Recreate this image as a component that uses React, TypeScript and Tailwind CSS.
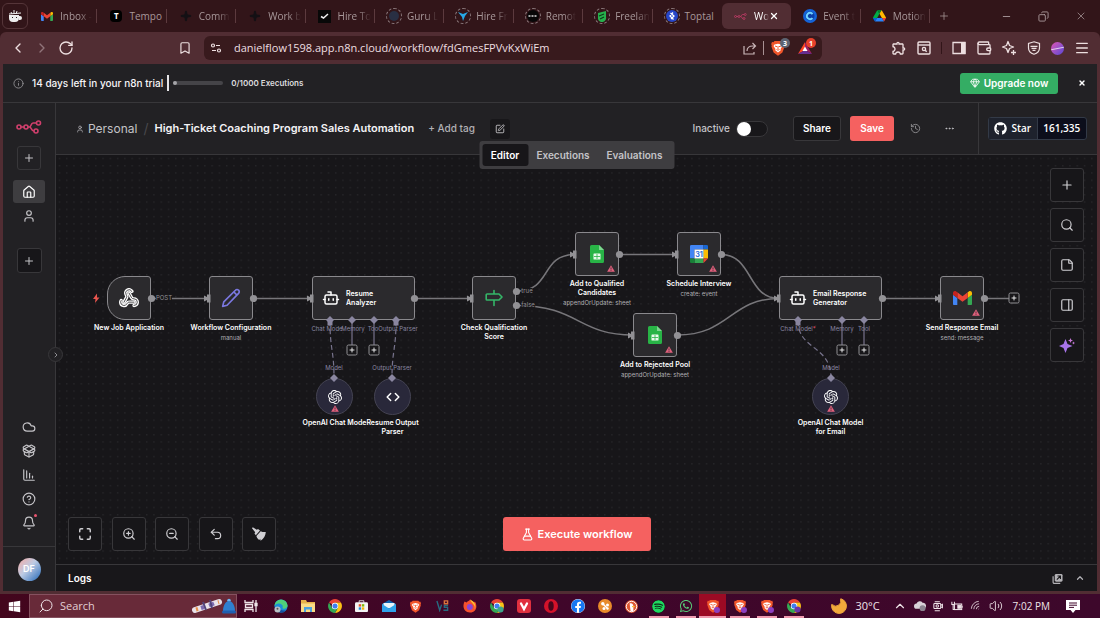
import React from 'react';
import {
  Bell, Bookmark, Bot, ChartColumnDecreasing, ChevronLeft, ChevronRight, ChevronUp, CircleHelp, Cloud, Code,
  Copy, Ellipsis, FlaskConical, Gem, History, House, Info, Maximize, Menu, Minus, Moon, PackageOpen, PanelRight,
  Plus, RotateCw, Search, Sparkle, SquarePen, StickyNote, Undo2, User, Volume2, Wallet, Webhook, Wifi, X, ZoomIn, ZoomOut,
} from 'lucide-react';
import { FaFacebook, FaGithub, FaSpotify, FaWhatsapp, FaWindows } from 'react-icons/fa';
import { MdOutlineExtension } from 'react-icons/md';
import { SiOpenai } from 'react-icons/si';

/* ---------- logos ---------- */

function GmailLogo({ className }: { className?: string }) {
  return (
    <svg viewBox="52 42 88 66" className={className} aria-hidden="true">
      <path fill="#4285f4" d="M58 108h14V74L52 59v43c0 3.32 2.69 6 6 6" />
      <path fill="#34a853" d="M120 108h14c3.32 0 6-2.69 6-6V59l-20 15" />
      <path fill="#fbbc04" d="M120 48v26l20-15v-8c0-7.42-8.47-11.65-14.4-7.2" />
      <path fill="#ea4335" d="M72 74V48l24 18 24-18v26L96 92" />
      <path fill="#c5221f" d="M52 51v8l20 15V48l-5.6-4.2c-5.94-4.45-14.4-.22-14.4 7.2" />
    </svg>
  );
}

function DriveLogo({ className }: { className?: string }) {
  return (
    <svg viewBox="0 0 87.3 78" className={className} aria-hidden="true">
      <path fill="#0066da" d="m6.6 66.85 3.85 6.65c.8 1.4 1.95 2.5 3.3 3.3l13.75-23.8h-27.5c0 1.55.4 3.1 1.2 4.5z" />
      <path fill="#00ac47" d="m43.65 25-13.75-23.8c-1.35.8-2.5 1.9-3.3 3.3l-25.4 44a9.06 9.06 0 0 0-1.2 4.5h27.5z" />
      <path fill="#ea4335" d="m73.55 76.8c1.35-.8 2.5-1.9 3.3-3.3l1.6-2.75 7.65-13.25c.8-1.4 1.2-2.95 1.2-4.5h-27.5l5.85 11.5z" />
      <path fill="#00832d" d="m43.65 25 13.75-23.8c-1.35-.8-2.9-1.2-4.5-1.2h-18.5c-1.6 0-3.15.45-4.5 1.2z" />
      <path fill="#2684fc" d="m59.8 53h-32.3l-13.75 23.8c1.35.8 2.9 1.2 4.5 1.2h50.8c1.6 0 3.15-.45 4.5-1.2z" />
      <path fill="#ffba00" d="m73.4 26.5-12.7-22c-.8-1.4-1.95-2.5-3.3-3.3l-13.75 23.8 16.15 28h27.45c0-1.55-.4-3.1-1.2-4.5z" />
    </svg>
  );
}

function SheetsLogo({ className }: { className?: string }) {
  return (
    <svg viewBox="0 0 14 18" className={className} aria-hidden="true">
      <path fill="#28b446" d="M1.5 0H9l5 5v11.5a1.5 1.5 0 0 1-1.5 1.5h-11A1.5 1.5 0 0 1 0 16.5v-15A1.5 1.5 0 0 1 1.5 0z" />
      <path fill="#7ed68f" d="M9 0l5 5H9z" />
      <rect x="3.5" y="8.5" width="7" height="6" rx=".6" fill="#e9f9ec" />
      <path stroke="#28b446" strokeWidth=".8" d="M7 9v5M4 11.5h6" />
    </svg>
  );
}

function CalendarLogo({ className }: { className?: string }) {
  return (
    <svg viewBox="0 0 20 20" className={className} aria-hidden="true">
      <path fill="#4285f4" d="M1.5 0H15v5H5v10H0V1.5A1.5 1.5 0 0 1 1.5 0z" />
      <path fill="#1967d2" d="M15 0h3.5A1.5 1.5 0 0 1 20 1.5V5h-5z" />
      <path fill="#fbbc04" d="M15 5h5v10h-5z" />
      <path fill="#34a853" d="M5 15h10v5H5z" />
      <path fill="#188038" d="M0 15h5v5H1.5A1.5 1.5 0 0 1 0 18.5z" />
      <path fill="#ea4335" d="M15 15h5l-5 5z" />
      <path fill="#fff" d="M5 5h10v10H5z" />
      <text x="10" y="13" fontSize="8" fontWeight="700" textAnchor="middle" fill="#2a6fdc" fontFamily="Inter, sans-serif">31</text>
    </svg>
  );
}

function N8nLogo({ className }: { className?: string }) {
  return (
    <svg viewBox="0 0 26 14" className={className} fill="none" stroke="currentColor" strokeWidth="1.6" aria-hidden="true">
      <circle cx="3" cy="7" r="2" />
      <circle cx="10" cy="7" r="2" />
      <circle cx="22.5" cy="3" r="2" />
      <circle cx="20" cy="11" r="2" />
      <path d="M5 7h3M12 7h1.5c2 0 1.2-4 3.5-4h3.5M13.5 7c2 0 1.5 4 4.5 4" />
    </svg>
  );
}

function ChromeLogo({ className, badge }: { className?: string; badge?: string }) {
  return (
    <svg viewBox="0 0 16 16" className={className} aria-hidden="true">
      <path fill="#e94435" d="M8 8L1.2 4A7.9 7.9 0 0 1 14.8 4H8z" />
      <path fill="#fbc116" d="M8 8l3.400 2L8 15.9A7.9 7.9 0 0 0 14.8 4H8z" />
      <path fill="#34a853" d="M8 8l3.400 2L8 15.9A7.9 7.9 0 0 1 1.2 4L4.500 10z" />
      <circle cx="8" cy="8" r="3.7" fill="#fff" />
      <circle cx="8" cy="8" r="2.9" fill="#3f7ff0" />
      {badge && <circle cx="12" cy="12" r="3.5" fill={badge} />}
    </svg>
  );
}

function BraveLogo({ className, badge }: { className?: string; badge?: boolean }) {
  return (
    <svg viewBox="0 0 16 16" className={className} aria-hidden="true">
      <path fill="#f1562b" d="M4.500 1h7l1 1.200 1.500-.1.800 2-.5 1.500.3 1-2.200 6L8 15.800l-4.400-3.200-2.200-6 .3-1-.5-1.500.8-2 1.500.1z" />
      <path fill="#fff" d="M4.500 4.500l3.500-.8 3.500.8 1 1.500-2 3 .3 1.300L8 12.500l-2.800-2.200.3-1.300-2-3z" />
      <path stroke="#f1562b" strokeWidth="1" fill="none" d="M5 6l2 .7M11 6l-2 .7M8 6v3M6.500 9.500L8 10.200l1.500-.7" />
      {badge && <circle cx="12.500" cy="12.500" r="3.500" fill="#8c3fc0" />}
    </svg>
  );
}

function EdgeLogo({ className }: { className?: string }) {
  return (
    <svg viewBox="0 0 16 16" className={className} aria-hidden="true">
      <circle cx="8" cy="8" r="7.500" fill="#1b8fd8" />
      <path fill="#4fd07a" d="M8 .5a7.500 7.500 0 0 1 7.500 7c0 2.500-2 3.500-4 3.500-2.500 0-1.500-1.500-1.500-2.500C10 6.500 8 5 5.500 5 3 5 1.300 6.500.6 8 .7 4 4 .5 8 .5z" />
      <path fill="#144f9e" d="M6 8.500c0 3.500 3 5.500 7.500 4.500A7.500 7.500 0 0 1 6 15.200z" />
      <circle cx="4" cy="12" r="3.500" fill="#b9c1c6" />
      <circle cx="4" cy="11.200" r="1.100" fill="#555" />
    </svg>
  );
}

function WarningMark({ className }: { className?: string }) {
  return (
    <svg viewBox="0 0 8 7" className={className} aria-hidden="true">
      <path fill="#e0607c" d="M4 .2L7.900 6.800H.1z" />
      <path stroke="#2b2a2d" strokeWidth=".8" d="M4 2.400v2.100M4 5.200v.8" />
    </svg>
  );
}

function WebhookIcon() {
  return (
    <span className="relative block size-5">
      <Webhook className="absolute inset-0 size-5 text-white" strokeWidth={4} />
      <Webhook className="absolute inset-0 size-5 text-[#2b2a2d]" strokeWidth={1} />
    </span>
  );
}

function PencilIcon() {
  return (
    <svg viewBox="0 0 18 18" className="size-5" fill="none" stroke="#7b78e0" strokeWidth="1.5" strokeLinejoin="round" aria-hidden="true">
      <path d="M1.500 16.500l1-4L13 2a1.900 1.900 0 0 1 2.800 0 1.900 1.900 0 0 1 0 2.800L5.500 15.500z" />
      <path d="M11.500 3.500l3 3" />
    </svg>
  );
}

function SignIcon() {
  return (
    <svg viewBox="0 0 18 18" className="size-[18px]" fill="none" stroke="#35b668" strokeWidth="1.6" strokeLinecap="round" strokeLinejoin="round" aria-hidden="true">
      <path d="M2 5h12l3 3-3 3H2a.8.8 0 0 1-.8-.8V5.800A.8.8 0 0 1 2 5zM9 1.500V5M9 11v5.500" />
    </svg>
  );
}

function BroomIcon() {
  return (
    <svg viewBox="0 0 14 14" className="size-3.5" fill="currentColor" aria-hidden="true">
      <path d="M.8.3l4 2.500L6 2l2 1.600-4.200 4.600L2.500 6.500l.7-1.200L0 1.300z" />
      <path d="M8.700 4.200c1.500.8 3.300 1 5.100.8-.2 3.500-2 6.800-5.200 8.700l-.4-2-.9 1.200C5.800 12 4.800 10.500 4.400 8.900z" />
    </svg>
  );
}

/* ---------- browser chrome ---------- */

function RingIcon({ children }: { children: React.ReactNode }) {
  return (
    <span className="flex size-4 items-center justify-center rounded-full border border-dashed border-[#8d7b7e]">
      {children}
    </span>
  );
}

const tabs = [
  { title: 'Inbox -', icon: <GmailLogo className="w-3" />, fade: true },
  {
    title: 'Tempo',
    icon: <span className="flex size-3 items-center justify-center rounded-sm bg-black text-[8px] font-bold text-white">T</span>,
  },
  { title: 'Comm', icon: <Sparkle className="size-3 fill-[#131014] text-[#131014]" />, fade: true },
  { title: 'Work b', icon: <Sparkle className="size-3 fill-[#131014] text-[#131014]" />, fade: true },
  {
    title: 'Hire To',
    fade: true,
    icon: (
      <svg viewBox="0 0 13 13" className="size-[13px]" aria-hidden="true">
        <path fill="#080808" d="M0 0h13v13H0z" />
        <path stroke="#eee" strokeWidth="1.500" fill="none" d="M3 6.500l2.500 1.500 4.500-4" />
      </svg>
    ),
  },
  { title: 'Guru L', icon: <RingIcon><span className="size-2.5 rounded-full bg-[#292f43]" /></RingIcon>, fade: true },
  {
    title: 'Hire Fr',
    fade: true,
    icon: (
      <RingIcon>
        <svg viewBox="0 0 10 10" className="size-2.5" aria-hidden="true">
          <path fill="#27a8e6" d="M0 1l5 2 5-2-3 4-2 5-1-4z" />
        </svg>
      </RingIcon>
    ),
  },
  {
    title: 'Remot',
    fade: true,
    icon: (
      <RingIcon>
        <svg viewBox="0 0 12 12" className="size-3" aria-hidden="true">
          <circle cx="6" cy="6" r="6" fill="#070707" />
          <path stroke="#ddd" strokeWidth="1.500" strokeDasharray="2 1" d="M1.500 6h9" />
        </svg>
      </RingIcon>
    ),
  },
  {
    title: 'Freelan',
    fade: true,
    icon: (
      <RingIcon>
        <svg viewBox="0 0 12 12" className="size-3" aria-hidden="true">
          <path fill="#26b14c" d="M2 3l8-2v6a4 4 0 0 1-8 2z" />
          <path stroke="#0c3d1b" strokeWidth="1.200" fill="none" d="M3 6l5-2M4 9l4-2" />
        </svg>
      </RingIcon>
    ),
  },
  {
    title: 'Toptal',
    icon: (
      <RingIcon>
        <svg viewBox="0 0 12 12" className="size-3" aria-hidden="true">
          <circle cx="6" cy="6" r="6" fill="#2746c8" />
          <path stroke="#fff" strokeWidth="1.300" fill="none" d="M4.500 3l3.500 3-3 3M7 2.500L4 6l3.500 3.500" />
        </svg>
      </RingIcon>
    ),
  },
  { title: 'Wo', icon: <N8nLogo className="w-[13px] text-[#c23c68]" />, active: true, fade: true },
  {
    title: 'Event t',
    fade: true,
    icon: (
      <svg viewBox="0 0 14 14" className="size-3.5" aria-hidden="true">
        <circle cx="7" cy="7" r="7" fill="#1463d8" />
        <circle cx="7" cy="7" r="4.500" fill="#0b3fa8" />
        <path stroke="#72d3ff" strokeWidth="2" fill="none" d="M9.500 5a3.200 3.200 0 1 0 0 4" />
      </svg>
    ),
  },
  { title: 'Motion', icon: <DriveLogo className="w-[13px]" />, fade: true },
];

function TabStrip() {
  return (
    <div className="flex h-8 items-center bg-[#321519] text-[#a8989a]">
      <button aria-label="Pinned tab" className="ml-0.5 flex size-[26px] items-center justify-center rounded-md border border-[#553539]">
        <svg viewBox="0 0 14 14" className="size-3.5" aria-hidden="true">
          <path fill="#eee" d="M1 6h10v3a4 4 0 0 1-4 4H5a4 4 0 0 1-4-4zM11 7h1a1.500 1.500 0 0 1 0 4h-1z" />
          <path stroke="#eee" fill="none" d="M3 3l1 2M6 1v4M9 2L8 5M1 5l12-1" />
          <path fill="#222" d="M4 8h1v1H4zM8 8h1v1H8z" />
        </svg>
      </button>
      <div className="flex h-full min-w-0 flex-1 items-center">
        {tabs.map((tab, index) => (
          <div key={index} className="relative flex h-full min-w-0 flex-1 items-center">
            <button
              className={`flex h-[26px] min-w-0 flex-1 items-center gap-1 rounded-md pl-2.5 text-left ${
                tab.active ? 'bg-[#512d33] text-white' : ''
              }`}
            >
              <span className="flex w-[18px] shrink-0 justify-center">{tab.icon}</span>
              <span
                className={`whitespace-nowrap text-[10px] ${
                  tab.fade ? '[mask-image:linear-gradient(to_right,black_60%,transparent)]' : ''
                }`}
              >
                {tab.title}
              </span>
            </button>
            {tab.active ? (
              <button aria-label="Close tab" className="absolute right-3 text-white">
                <X className="size-2.5" strokeWidth={3} />
              </button>
            ) : (
              index !== 9 && <span className="h-3.5 w-px bg-[#5c3a3e]" />
            )}
          </div>
        ))}
      </div>
      <button aria-label="New tab" className="ml-2 mr-[51px]"><Plus className="size-3" strokeWidth={1.5} /></button>
      <div className="flex items-center gap-[26px] pr-[13px]">
        <button aria-label="Minimize"><Minus className="size-[11px]" /></button>
        <button aria-label="Restore"><Copy className="size-[11px] -scale-x-100" /></button>
        <button aria-label="Close window"><X className="size-3" strokeWidth={1.5} /></button>
      </div>
    </div>
  );
}

function AddressBar() {
  return (
    <div className="flex h-8 items-center rounded-t-md bg-[#512d33] text-[#eddfe0]">
      <div className="flex w-[204px] items-center gap-2 pl-2.5">
        <button aria-label="Back"><ChevronLeft className="size-4" /></button>
        <button aria-label="Forward" className="text-[#90757a]"><ChevronRight className="size-4" /></button>
        <button aria-label="Reload"><RotateCw className="size-4" /></button>
        <button aria-label="Bookmark" className="ml-auto mr-3"><Bookmark className="size-3.5" /></button>
      </div>
      <div className="flex h-6 min-w-0 flex-1 items-center rounded-md bg-[#381a1d] pl-1.5 pr-1.5">
        <svg viewBox="0 0 12 12" className="size-3" fill="none" stroke="currentColor" strokeWidth="1.200" aria-hidden="true">
          <circle cx="3" cy="3.500" r="1.500" /><path d="M6 3.500h4M2 8.500h4" /><circle cx="9" cy="8.500" r="1.500" />
        </svg>
        <input
          aria-label="Address"
          defaultValue="danielflow1598.app.n8n.cloud/workflow/fdGmesFPVvKxWiEm"
          className="ml-3 min-w-0 flex-1 bg-transparent text-[11px] outline-none"
        />
        <button aria-label="Share page">
          <svg viewBox="0 0 14 14" className="size-3.5" fill="none" stroke="#c9b6b8" strokeWidth="1.200" aria-hidden="true">
            <path d="M1 5v8h10v-2M4 10c0-4 3-5 6-5h2M9.500 2l3 3-3 3" />
          </svg>
        </button>
        <span className="mx-1.5 h-3.5 w-px bg-[#a89193]" />
        <button aria-label="Brave Shields" className="relative mr-3">
          <BraveLogo className="size-4" />
          <span className="absolute -right-1 -top-0.5 flex size-2.5 items-center justify-center rounded-full bg-[#5d6472] text-[7px] font-bold leading-none text-white">3</span>
        </button>
        <button aria-label="Brave Rewards" className="relative mr-1">
          <svg viewBox="0 0 14 12" className="h-3 w-3.5" aria-hidden="true">
            <path fill="#ff4724" d="M7 0L0 12l7-4z" /><path fill="#9e1f63" d="M7 0l7 12-7-4z" />
            <path fill="#662d91" d="M0 12h14L7 8z" /><path fill="#fff" d="M7 4.500L4.500 9h5z" />
          </svg>
          <span className="absolute -right-1 -top-1 flex size-2.5 items-center justify-center rounded-full bg-[#e8412c] text-[7px] font-bold leading-none text-white">1</span>
        </button>
      </div>
      <div className="ml-[69px] flex w-[209px] items-center justify-between pr-2.5">
        <button aria-label="Extensions"><MdOutlineExtension className="size-4" /></button>
        <button aria-label="Search tabs">
          <svg viewBox="0 0 14 14" className="size-3.5" fill="none" stroke="currentColor" strokeWidth="1.400" aria-hidden="true">
            <rect x="1" y="1" width="12" height="12" rx="1" /><path d="M1 4h12" /><circle cx="7" cy="8" r="1.600" /><path d="M8.200 9.200l1.500 1.500" />
          </svg>
        </button>
        <span className="h-3 w-px bg-[#321519]" />
        <button aria-label="Sidebar">
          <svg viewBox="0 0 14 14" className="size-3.5" aria-hidden="true">
            <path fill="none" stroke="currentColor" strokeWidth="1.300" d="M1 1.500h12v11H1z" /><path fill="currentColor" d="M9 1h4.500v12H9z" />
          </svg>
        </button>
        <button aria-label="Wallet"><Wallet className="size-4" /></button>
        <button aria-label="Leo AI">
          <svg viewBox="0 0 16 16" className="size-4" fill="none" stroke="currentColor" strokeWidth="1.300" strokeLinejoin="round" aria-hidden="true">
            <path d="M7 1.500l1.500 4 4 1.500-4 1.500L7 12.500 5.500 8.500l-4-1.500 4-1.500zM12.500 10v5M10 12.500h5" />
          </svg>
        </button>
        <button aria-label="VPN">
          <svg viewBox="0 0 14 14" className="size-3.5" fill="none" stroke="currentColor" strokeWidth="1.200" aria-hidden="true">
            <path d="M7 .8l5.500 1.700V7c0 3.500-3 5.500-5.500 6.300C4.500 12.500 1.500 10.500 1.500 7V2.500z" /><path d="M3.500 5.300h7M4.500 7.300h5M5.500 9.300h3" />
          </svg>
        </button>
        <button aria-label="Profile" className="flex size-[13px] items-center rounded-full bg-linear-to-br from-[#e04fb2] to-[#5741d6]">
          <span className="h-px w-full -rotate-12 bg-white/70" />
        </button>
        <button aria-label="Menu"><Menu className="size-4" /></button>
      </div>
    </div>
  );
}

/* ---------- n8n shell ---------- */

function TrialBanner() {
  return (
    <div className="flex h-[39px] items-center border-b border-[#38373a] bg-[#222124] pl-2.5 pr-[11px]">
      <Info className="size-[11px] text-[#8e8d90]" />
      <p className="ml-2 text-[10px] font-medium text-[#f6f5f8]">14 days left in your n8n trial</p>
      <span className="ml-1 h-4 w-0.5 bg-[#e6e5e8]" />
      <div className="ml-1 h-1 w-[50px] rounded-full bg-[#454448]">
        <div className="size-1 rounded-full bg-[#a5a4a8]" />
      </div>
      <p className="ml-2 text-[8px] font-semibold text-[#dddcdf]">0/1000 Executions</p>
      <button className="ml-auto flex h-[21px] w-[98px] items-center justify-center gap-1 rounded-[3px] bg-[#34ad64] text-[10px] font-semibold text-white">
        <Gem className="size-2.5" />
        Upgrade now
      </button>
      <button aria-label="Dismiss" className="ml-5 text-white"><X className="size-2" strokeWidth={4} /></button>
    </div>
  );
}

const sideLinks = [
  { label: 'Admin panel', icon: Cloud },
  { label: 'Templates', icon: PackageOpen },
  { label: 'Insights', icon: ChartColumnDecreasing },
  { label: 'Help', icon: CircleHelp },
];

function Sidebar() {
  return (
    <nav className="relative flex w-[53px] shrink-0 flex-col items-center border-r border-[#38373a] bg-[#222124] text-[#c4c3c7]">
      <a href="#home" aria-label="n8n" className="mt-[17px]"><N8nLogo className="w-[26px] text-[#d03f6c]" /></a>
      <button aria-label="Create" className="mt-3 flex size-6 items-center justify-center rounded-[3px] border border-[#38373a]">
        <Plus className="size-3" />
      </button>
      <a href="#overview" aria-label="Overview" className="mt-2.5 flex h-[23px] w-8 items-center justify-center rounded-[3px] bg-[#3e3d40] text-white">
        <House className="size-3.5" />
      </a>
      <a href="#personal" aria-label="Personal" className="mt-1.5"><User className="size-3.5" /></a>
      <button aria-label="Add project" className="mt-[25px] flex size-[25px] items-center justify-center rounded-[3px] border border-[#38373a] bg-[#171619]">
        <Plus className="size-3" />
      </button>
      <div className="mt-auto flex flex-col gap-2.5 pb-4">
        {sideLinks.map((link) => (
          <a key={link.label} href="#side" aria-label={link.label}><link.icon className="size-3.5" /></a>
        ))}
        <button aria-label="What's new" className="relative">
          <Bell className="size-3.5" />
          <span className="absolute -right-px -top-0.5 size-[3px] rounded-full bg-[#e9546f]" />
        </button>
      </div>
      <div className="flex h-[45px] w-full items-center justify-center border-t border-[#38373a]">
        <button className="size-[23px] rounded-full bg-linear-to-br from-[#f4a9a2] via-[#bccbe4] via-45% to-[#1566b4] text-[9px] font-semibold text-white">DF</button>
      </div>
      <button aria-label="Expand sidebar" className="absolute -right-2 top-[244px] z-10 flex size-[15px] items-center justify-center rounded-full border border-[#38373a] bg-[#222124]">
        <ChevronRight className="size-2" />
      </button>
    </nav>
  );
}

function WorkflowHeader() {
  return (
    <header className="relative z-10 flex h-[52px] items-center border-b border-[#38373a] bg-[#222124]">
      <a href="#personal" className="ml-5 flex items-center gap-1 text-xs text-[#c4c3c7]">
        <User className="size-2" />
        Personal
      </a>
      <span className="mx-1.5 text-sm text-[#49484c]">/</span>
      <h1 className="whitespace-nowrap text-[11px] font-semibold text-[#f3f2f5]">High-Ticket Coaching Program Sales Automation</h1>
      <button className="ml-3.5 whitespace-nowrap text-[10px] font-medium text-[#b2b1b5]">+ Add tag</button>
      <button aria-label="Edit description" className="ml-[15px] flex size-5 items-center justify-center rounded-[3px] bg-[#18171a] text-[#d0cfd3]">
        <SquarePen className="size-2.5" />
      </button>
      <label htmlFor="active" className="ml-auto text-[10px] font-medium text-[#c4c3c7]">Inactive</label>
      <input
        id="active"
        type="checkbox"
        role="switch"
        className="ml-1.5 h-4 w-8 appearance-none rounded-full border border-[#38373a] bg-[#18171a] before:block before:size-3.5 before:rounded-full before:bg-white checked:before:translate-x-4"
      />
      <button className="ml-[25px] h-[25px] w-12 rounded-[3px] border border-[#38373a] bg-[#18171a] text-[10px] font-semibold text-white">Share</button>
      <button className="ml-[9px] h-[25px] w-11 rounded-[3px] bg-[#f56160] text-[10px] font-semibold text-white">Save</button>
      <button aria-label="History" className="ml-4 text-[#8e8d90]"><History className="size-[11px]" /></button>
      <button aria-label="More" className="ml-[23px] text-[#c4c3c7]"><Ellipsis className="size-[11px]" /></button>
      <div className="ml-[23px] flex h-full items-center border-l border-[#38373a] pl-[9px] pr-2.5">
        <a href="#github" className="flex h-[23px] w-[99px] items-center rounded-[3px] border border-[#333a47] bg-[#0c0e1b] font-['Open_Sans',sans-serif] text-[10px] font-semibold text-white">
          <span className="flex h-full w-1/2 items-center justify-center gap-1 border-r border-[#333a47] bg-[#1e222d]">
            <FaGithub className="size-[13px]" />
            Star
          </span>
          <span className="w-1/2 text-center">161,335</span>
        </a>
      </div>
      <div className="absolute left-1/2 top-[38px] flex h-7 -translate-x-1/2 items-center rounded-[3px] bg-[#3e3d40] p-[3px] text-[10px] font-semibold text-[#c4c3c7]">
        <button className="h-full w-[46px] rounded-[3px] bg-[#171619] text-white">Editor</button>
        <button className="h-full w-[70px]">Executions</button>
        <button className="h-full w-[73px]">Evaluations</button>
      </div>
    </header>
  );
}

/* ---------- canvas ---------- */

type FlowNode = {
  name: string;
  sub?: string;
  x: number;
  y: number;
  shape: 'trigger' | 'square' | 'agent' | 'round';
  icon: React.ReactNode;
  warn?: boolean;
};

const nodes: FlowNode[] = [
  { name: 'New Job Application', x: 51, y: 121, shape: 'trigger', icon: <WebhookIcon /> },
  { name: 'Workflow Configuration', sub: 'manual', x: 153, y: 121, shape: 'square', icon: <PencilIcon /> },
  { name: 'Resume\nAnalyzer', x: 256, y: 121, shape: 'agent', icon: <Bot className="size-[18px]" /> },
  { name: 'Check Qualification\nScore', x: 416, y: 121, shape: 'square', icon: <SignIcon /> },
  { name: 'Add to Qualified\nCandidates', sub: 'appendOrUpdate: sheet', x: 519, y: 77, shape: 'square', icon: <SheetsLogo className="h-[18px]" />, warn: true },
  { name: 'Schedule Interview', sub: 'create: event', x: 621, y: 77, shape: 'square', icon: <CalendarLogo className="size-[18px]" />, warn: true },
  { name: 'Add to Rejected Pool', sub: 'appendOrUpdate: sheet', x: 577, y: 158, shape: 'square', icon: <SheetsLogo className="h-[18px]" />, warn: true },
  { name: 'Email Response\nGenerator', x: 723, y: 121, shape: 'agent', icon: <Bot className="size-[18px]" /> },
  { name: 'Send Response Email', sub: 'send: message', x: 884, y: 121, shape: 'square', icon: <GmailLogo className="w-[19px]" />, warn: true },
  { name: 'OpenAI Chat Mode', x: 260, y: 223, shape: 'round', icon: <SiOpenai className="size-[14px]" />, warn: true },
  { name: 'Resume Output\nParser', x: 318, y: 223, shape: 'round', icon: <Code className="size-3.5" strokeWidth={2.5} /> },
  { name: 'OpenAI Chat Model\nfor Email', x: 756, y: 223, shape: 'round', icon: <SiOpenai className="size-[14px]" />, warn: true },
];

const shapes = {
  trigger: 'size-11 justify-center rounded-[3px] rounded-l-[18px] border-[#8a898d] bg-[#2b2a2d]',
  square: 'size-11 justify-center rounded-[3px] border-[#8a898d] bg-[#2b2a2d]',
  agent: 'h-11 w-[103px] gap-1.5 rounded-[3px] border-[#8a898d] bg-[#2b2a2d] pl-[9px]',
  round: 'size-[37px] justify-center rounded-full border-[#444352] bg-[#29283a]',
};

function NodeCard({ node }: { node: FlowNode }) {
  const agent = node.shape === 'agent';
  const round = node.shape === 'round';
  return (
    <div
      className={`absolute flex flex-col items-center ${agent ? 'w-[103px]' : round ? 'w-[37px]' : 'w-11'}`}
      style={{ left: node.x, top: node.y }}
    >
      <div className={`relative flex shrink-0 items-center border text-white ${shapes[node.shape]}`}>
        {node.icon}
        {agent && <span className="whitespace-pre-line text-[7px] font-semibold leading-[9px]">{node.name}</span>}
        {node.warn && <WarningMark className={`absolute w-2 ${round ? 'bottom-0.5' : 'bottom-[3px] right-[3px]'}`} />}
      </div>
      {!agent && (
        <p className="mt-[3px] w-max whitespace-pre-line text-center text-[7px] font-semibold leading-[9px] text-white">{node.name}</p>
      )}
      {node.sub && <p className="mt-px w-max text-[6px] leading-[9px] text-[#b0afb3]">{node.sub}</p>}
    </div>
  );
}

const solidEdges = [
  'M96 143.500H153',
  'M198 143.500H256',
  'M359 143.500H416',
  'M461 136C496 136 484 99.500 519 99.500',
  'M461 150.500C522 150.500 522 180 577 180',
  'M563 99.500H621',
  'M665 99.500C697 99.500 691 143.500 723 143.500',
  'M621 180C674 180 674 143.500 723 143.500',
  'M826 143.500H884',
  'M928 143.500H953',
];

const dashedEdges = ['M274 166C274 195 278 195 278 223', 'M340 166C340 195 336 195 336 223', 'M742 166C742 195 775 190 775 223'];

const outputs = [[95, 143], [197, 143], [358, 143], [460, 136], [460, 150], [563, 99], [665, 99], [621, 180], [826, 143], [928, 143]];
const inputs = [[153, 143], [256, 143], [416, 143], [519, 99], [621, 99], [577, 180], [723, 143], [884, 143]];
const diamonds = [[274, 165], [296, 165], [318, 165], [340, 165], [742, 165], [786, 165], [808, 165], [278, 223], [336, 223], [775, 223]];

const ports = [
  { text: 'Chat Mode', x: 271, y: 174 },
  { text: 'Memory', x: 297, y: 174 },
  { text: 'Too', x: 317, y: 174 },
  { text: 'Output Parser', x: 342, y: 174 },
  { text: 'Model', x: 278, y: 213 },
  { text: 'Output Parser', x: 336, y: 213 },
  { text: 'Chat Model', x: 742, y: 174, required: true },
  { text: 'Memory', x: 786, y: 174 },
  { text: 'Tool', x: 808, y: 174 },
  { text: 'Model', x: 775, y: 213 },
];

const edgeLabels = [
  { text: 'POST', x: 108, y: 143 },
  { text: 'true', x: 471, y: 136 },
  { text: 'false', x: 472, y: 150 },
];

const addHandles = [[296, 195], [318, 195], [786, 195], [808, 195], [958, 143]];

const canvasTools = [
  { label: 'Add node', icon: <Plus className="size-3.5" /> },
  { label: 'Search', icon: <Search className="size-3.5" /> },
  { label: 'Add sticky note', icon: <StickyNote className="size-3.5" /> },
  { label: 'Toggle panel', icon: <PanelRight className="size-3.5" /> },
  {
    label: 'Ask assistant',
    icon: (
      <svg viewBox="0 0 16 16" className="size-4" aria-hidden="true">
        <path fill="#a874ea" d="M6.500 2l2 5L13.500 9l-5 2-2 5-2-5-4.500-2 4.500-2z" />
        <path fill="#c878d8" d="M11.500 1l.7 1.800 1.800.7-1.800.7-.7 1.800-.7-1.800L9 3.500l1.800-.7zM14.500 4.500l.5 1 1 .5-1 .5-.5 1-.5-1-1-.5 1-.5z" />
      </svg>
    ),
  },
];

const viewTools = [
  { label: 'Zoom to fit', icon: <Maximize className="size-3.5" strokeWidth={2.5} /> },
  { label: 'Zoom in', icon: <ZoomIn className="size-3.5" /> },
  { label: 'Zoom out', icon: <ZoomOut className="size-3.5" /> },
  { label: 'Undo', icon: <Undo2 className="size-3.5" /> },
  { label: 'Tidy up', icon: <BroomIcon /> },
];

const toolButton = 'flex size-[34px] items-center justify-center rounded-[3px] border border-[#38373a] bg-[#171619] text-[#d0cfd3]';

function Canvas() {
  return (
    <main className="relative flex-1 overflow-hidden bg-[#171619]">
      <svg className="absolute inset-0 size-full" aria-hidden="true">
        <defs>
          <pattern id="dots" width="7.270" height="7.270" patternUnits="userSpaceOnUse">
            <rect x="3" y="3" width="1" height="1" fill="#353438" />
          </pattern>
        </defs>
        <rect width="100%" height="100%" fill="url(#dots)" />
        <g fill="none" stroke="#77767a" strokeWidth="1.500">
          {solidEdges.map((d) => <path key={d} d={d} />)}
        </g>
        <g fill="none" stroke="#77738c" strokeWidth="1.200">
          {dashedEdges.map((d) => <path key={d} d={d} strokeDasharray="5 3" />)}
          <path d="M296 166v24M318 166v24M786 166v24M808 166v24" />
        </g>
        <path fill="#e8554e" d="M41 138.500l-4 5.500h2.500l-.5 4 4.500-5.500H41z" />
      </svg>

      {nodes.map((node) => <NodeCard key={`${node.x}-${node.y}`} node={node} />)}

      <svg className="pointer-events-none absolute inset-0 size-full" aria-hidden="true">
        <g fill="#929195">
          {outputs.map(([x, y]) => <circle key={`${x}-${y}`} cx={x + 0.5} cy={y + 0.5} r="3.600" />)}
          {inputs.map(([x, y]) => <path key={`${x}-${y}`} d={`M${x - 5} ${y - 2.5}l3 1.500v-2.500h3.500v8h-3.500v-2.500l-3 1.500z`} />)}
        </g>
        <g fill="#8a86a0">
          {diamonds.map(([x, y]) => <path key={`${x}-${y}`} d={`M${x} ${y - 4}l4 4-4 4-4-4z`} />)}
          <path d="M271.500 166h5v4.500h-5zM337.500 166h5v4.500h-5zM739.500 166h5v4.500h-5z" />
        </g>
      </svg>

      {ports.map((port) => (
        <span
          key={`${port.x}-${port.y}`}
          className="absolute -translate-x-1/2 -translate-y-1/2 whitespace-nowrap text-[6px] leading-none text-[#8a86a0]"
          style={{ left: port.x, top: port.y }}
        >
          {port.text}
          {port.required && <span className="text-[#e9546f]">*</span>}
        </span>
      ))}
      {edgeLabels.map((label) => (
        <span
          key={label.text}
          className="absolute -translate-x-1/2 -translate-y-1/2 bg-[#171619] text-[6px] leading-none text-[#929195]"
          style={{ left: label.x, top: label.y }}
        >
          {label.text}
        </span>
      ))}
      {addHandles.map(([x, y]) => (
        <button
          key={x}
          aria-label="Add connected node"
          className="absolute flex size-[11px] -translate-x-1/2 -translate-y-1/2 items-center justify-center rounded-[2px] border border-[#929195] bg-[#171619] text-white"
          style={{ left: x, top: y }}
        >
          <Plus className="size-[7px]" strokeWidth={3} />
        </button>
      ))}

      <div className="absolute right-[13px] top-[13px] flex flex-col gap-1.5">
        {canvasTools.map((tool) => (
          <button key={tool.label} aria-label={tool.label} className={toolButton}>{tool.icon}</button>
        ))}
      </div>
      <div className="absolute bottom-[13px] left-3 flex w-[208px] justify-between">
        {viewTools.map((tool) => (
          <button key={tool.label} aria-label={tool.label} className={toolButton}>{tool.icon}</button>
        ))}
      </div>
      <button className="absolute bottom-[13px] left-1/2 flex h-[34px] w-[148px] -translate-x-1/2 items-center justify-center gap-1 rounded-[3px] bg-[#f56160] text-[11px] font-semibold text-white">
        <FlaskConical className="size-[13px]" />
        Execute workflow
      </button>
    </main>
  );
}

function LogsBar() {
  return (
    <footer className="flex h-[27px] items-center border-t border-[#38373a] bg-[#18171a] pl-3 pr-3 text-white">
      <h2 className="text-[10px] font-semibold">Logs</h2>
      <button aria-label="Pop out" className="ml-auto text-[#b2b1b5]">
        <svg viewBox="0 0 12 12" className="size-[11px]" aria-hidden="true">
          <rect x="3" y="1" width="8.500" height="8.500" rx="1.500" fill="currentColor" />
          <path stroke="#18171a" strokeWidth="1.200" fill="none" d="M5.300 7.300L9 3.500M6 3.300h3.200v3.200" />
          <path stroke="currentColor" strokeWidth="1.300" fill="none" d="M1.200 3.500V10a1.300 1.300 0 0 0 1.300 1.300H9" />
        </svg>
      </button>
      <button aria-label="Open logs" className="ml-3 text-[#b2b1b5]"><ChevronUp className="size-2.5" strokeWidth={3} /></button>
    </footer>
  );
}

/* ---------- taskbar ---------- */

const apps = [
  { name: 'Edge', icon: <EdgeLogo className="size-3.5" /> },
  {
    name: 'Explorer',
    icon: (
      <svg viewBox="0 0 14 12" className="w-3.5" aria-hidden="true">
        <path fill="#e8b34a" d="M0 0h5l1 2h8v10H0z" /><path fill="#fbdc86" d="M0 3.500h14V12H0z" /><path fill="#4da3de" d="M3 7h8v5H9V9.500H5V12H3z" />
      </svg>
    ),
  },
  { name: 'Chrome', icon: <ChromeLogo className="size-3.5" /> },
  {
    name: 'Store',
    icon: (
      <svg viewBox="0 0 14 13" className="w-[13px]" aria-hidden="true">
        <path fill="none" stroke="#ddd" d="M4.500 3V.8h5V3" /><rect y="2.500" width="14" height="10.500" rx="1.500" fill="#f4f4f4" />
        <path fill="#e7542c" d="M4 4.500h2.600v2.600H4z" /><path fill="#7fba00" d="M7.400 4.500H10v2.600H7.400z" />
        <path fill="#1b8fe0" d="M4 7.900h2.600v2.600H4z" /><path fill="#f6b500" d="M7.400 7.900H10v2.600H7.400z" />
      </svg>
    ),
  },
  {
    name: 'Mail',
    icon: (
      <svg viewBox="0 0 14 12" className="w-3.5" aria-hidden="true">
        <path fill="#0e63b0" d="M0 4l7-4 7 4v8H0z" /><path fill="#e8f4fc" d="M1.500 3h11v5h-11z" /><path fill="#2ea3ec" d="M0 4l7 4.500L14 4v8H0z" />
      </svg>
    ),
  },
  { name: 'Brave', icon: <BraveLogo className="size-[13px]" /> },
  {
    name: 'VS',
    icon: (
      <svg viewBox="0 0 14 12" className="w-[13px]" fill="none" strokeWidth="1.500" aria-hidden="true">
        <path stroke="#276b80" d="M1 1l3 10 2-6M13 6H9v2h3.500v3H8" /><path stroke="#d9743c" d="M9 1h3.500v3H9z" />
      </svg>
    ),
  },
  {
    name: 'Firefox',
    icon: (
      <svg viewBox="0 0 14 14" className="size-3.5" aria-hidden="true">
        <path fill="#f5502e" d="M1.500 2.500l2 1C5 2 6 2 7 .500c1 1.500 3 1.500 4 3l1-1c3 5 1 11-5 11S-1 7.500 1.500 2.500z" />
        <path fill="#fdc02f" d="M7 .5c4 1.500 7 6 4.500 10C13 5.500 9 5.500 7 .5z" /><circle cx="6.800" cy="8" r="3" fill="#8a45d6" />
      </svg>
    ),
  },
  { name: 'Chrome profile', icon: <ChromeLogo className="size-3.5" badge="#3da58b" /> },
  {
    name: 'Vivaldi',
    icon: (
      <svg viewBox="0 0 14 14" className="size-3.5" aria-hidden="true">
        <rect width="14" height="14" rx="3" fill="#e0303f" /><path stroke="#fff" strokeWidth="2.300" strokeLinecap="round" fill="none" d="M4 4.500L7 10l3-5.500" />
      </svg>
    ),
  },
  {
    name: 'Opera',
    icon: (
      <svg viewBox="0 0 14 14" className="size-3.5" aria-hidden="true">
        <circle cx="7" cy="7" r="7" fill="#d3122a" /><ellipse cx="7" cy="7" rx="2.700" ry="4.800" fill="#45061c" />
      </svg>
    ),
  },
  { name: 'Facebook', icon: <FaFacebook className="size-3.5 rounded-full bg-white text-[#1877f2]" /> },
  {
    name: 'Orange',
    icon: (
      <svg viewBox="0 0 14 14" className="size-3.5" aria-hidden="true">
        <circle cx="7" cy="7" r="7" fill="#e88b2a" />
        <path stroke="#fff" strokeWidth="1.500" fill="none" d="M5 5l4 4" />
        <circle cx="4.800" cy="4.800" r="1.700" fill="#fff" /><circle cx="9.500" cy="6" r="1.500" fill="#fff" /><circle cx="6" cy="9.500" r="1.500" fill="#fff" /><circle cx="9.500" cy="9.500" r="1.200" fill="#fff" />
      </svg>
    ),
  },
  {
    name: 'DuckDuckGo',
    icon: (
      <svg viewBox="0 0 14 14" className="size-[13px]" aria-hidden="true">
        <circle cx="7" cy="7" r="7" fill="#de5833" /><circle cx="7" cy="7" r="5.600" fill="none" stroke="#fff" />
        <path fill="#fff" d="M5 3.500c3-.5 4 1 4 3.500v5H6z" /><path fill="#fdc02f" d="M7.500 6.500h3v1.200h-3z" />
      </svg>
    ),
  },
  { name: 'Spotify', icon: <FaSpotify className="size-[13px] rounded-full bg-[#0d2b17] text-[#1ed760]" />, open: true },
  { name: 'WhatsApp', icon: <FaWhatsapp className="size-3.5 text-[#58c877]" />, open: true },
  { name: 'Brave window 1', icon: <BraveLogo className="size-3.5" badge />, open: true, active: true },
  { name: 'Brave window 2', icon: <BraveLogo className="size-3.5" badge />, open: true },
  { name: 'Brave window 3', icon: <BraveLogo className="size-3.5" badge />, open: true },
  { name: 'Chrome window', icon: <ChromeLogo className="size-3.5" badge="#6b35a8" />, open: true },
];

function Taskbar() {
  return (
    <div className="flex h-6 items-center bg-linear-to-r from-[#43061d] via-[#40062a] to-[#3d082b] text-[#efe4e8]">
      <button aria-label="Start" className="flex w-[29px] justify-center"><FaWindows className="size-[13px] text-white" /></button>
      <div className="flex h-full w-[208px] items-center border border-[#85515f] bg-[#682a39] pl-2">
        <Search className="size-4 -scale-x-100" strokeWidth={1.5} />
        <input aria-label="Search" placeholder="Search" className="ml-1.5 min-w-0 flex-1 bg-transparent text-[11px] outline-none placeholder:text-[#e2ced4]" />
        <svg viewBox="0 0 46 20" className="h-5 w-[46px]" aria-hidden="true">
          <path stroke="#e9e3ea" strokeWidth="6" strokeLinecap="round" d="M5 14l24-8" />
          <path stroke="#7c6bb0" strokeWidth="4" d="M11 12l3-1M19 9.500l5-2" /><path stroke="#e8914a" strokeWidth="4" d="M6 13.500l2-.6M28 6.300l1-.3" />
          <path stroke="#51457c" strokeWidth="2" d="M13 6l3 8M20 4l2 8" />
          <circle cx="39" cy="4.500" r="1.800" fill="#6eb6f0" /><path fill="#2f80d0" d="M33 15c0-6 3-10 6-10s6 4 6 10z" />
          <path stroke="#1e5fb0" strokeWidth="3" strokeLinecap="round" d="M33.500 16h11" />
        </svg>
      </div>
      <button aria-label="Task view" className="flex w-[27px] justify-center">
        <svg viewBox="0 0 14 12" className="w-3.5" fill="none" stroke="currentColor" strokeWidth="1.300" aria-hidden="true">
          <path d="M1 0v2.500h8V0M1 12V9.500h8V12M1.500 4.500h7v3h-7zM12 0v12" /><path fill="currentColor" d="M11 3.500h2v2h-2z" />
        </svg>
      </button>
      <div className="ml-[3px] flex h-full">
        {apps.map((app) => (
          <button
            key={app.name}
            aria-label={app.name}
            className={`relative flex h-full w-[27px] items-center justify-center ${app.active ? 'bg-[#9c0a24]' : ''}`}
          >
            {app.icon}
            {app.open && <span className={`absolute bottom-0 h-0.5 bg-[#f09bb0] ${app.active ? 'w-full' : 'w-5'}`} />}
          </button>
        ))}
      </div>
      <div className="ml-auto flex items-center pr-5">
        <Moon className="size-5 fill-[#f2a93b] text-[#f2a93b] -scale-x-100 rotate-12" strokeWidth={1} />
        <span className="ml-1.5 text-[11px]">30°C</span>
        <div className="ml-2.5 flex w-[117px] items-center justify-around">
          <ChevronUp className="size-3.5" />
          <svg viewBox="0 0 14 12" className="w-3" aria-hidden="true">
            <path fill="#d9d2d8" d="M3 9a3 3 0 0 1 0-6 4 4 0 0 1 7-1 3.500 3.500 0 0 1 1 7z" /><circle cx="10" cy="8.500" r="3.500" fill="#8c8590" />
          </svg>
          <svg viewBox="0 0 12 14" className="h-3" fill="none" stroke="currentColor" strokeWidth="1.200" aria-hidden="true">
            <rect x="1" y="4" width="8" height="6" rx="1" /><circle cx="5" cy="7" r="1.500" /><path d="M9 6l2-1v4l-2-1M2 2h6M2 12.500h6" />
          </svg>
          <svg viewBox="0 0 14 12" className="w-3" fill="none" stroke="currentColor" strokeWidth="1.200" aria-hidden="true">
            <rect x="4" y="3.500" width="8.500" height="6.500" /><path fill="currentColor" d="M8 5h3v3.500H8zM13 5.500v2.500" /><path d="M1 1v3h3V1M2.500 4v6H4" />
          </svg>
          <Wifi className="size-3 -rotate-45" strokeWidth={1.5} />
          <Volume2 className="size-3.5" strokeWidth={1.5} />
        </div>
        <span className="ml-1.5 whitespace-nowrap text-[10px]">7:02 PM</span>
        <button aria-label="Notifications" className="ml-4">
          <svg viewBox="0 0 14 13" className="w-3.5" aria-hidden="true">
            <path fill="#fff" d="M0 0h14v10H9.500L7 13l-2.500-3H0z" /><path stroke="#40062a" d="M3 3h8M3 5.200h8M3 7.400h5" />
          </svg>
        </button>
      </div>
    </div>
  );
}

export default function App() {
  return (
    <div className="flex min-h-screen flex-col bg-[#321519] font-['Open_Sans',sans-serif]">
      <TabStrip />
      <AddressBar />
      <div className="flex flex-1 flex-col bg-[#512d33] px-[3px] pb-[3px] font-['Inter',sans-serif]">
        <TrialBanner />
        <div className="flex flex-1">
          <Sidebar />
          <div className="flex min-w-0 flex-1 flex-col">
            <WorkflowHeader />
            <Canvas />
            <LogsBar />
          </div>
        </div>
      </div>
      <Taskbar />
    </div>
  );
}
